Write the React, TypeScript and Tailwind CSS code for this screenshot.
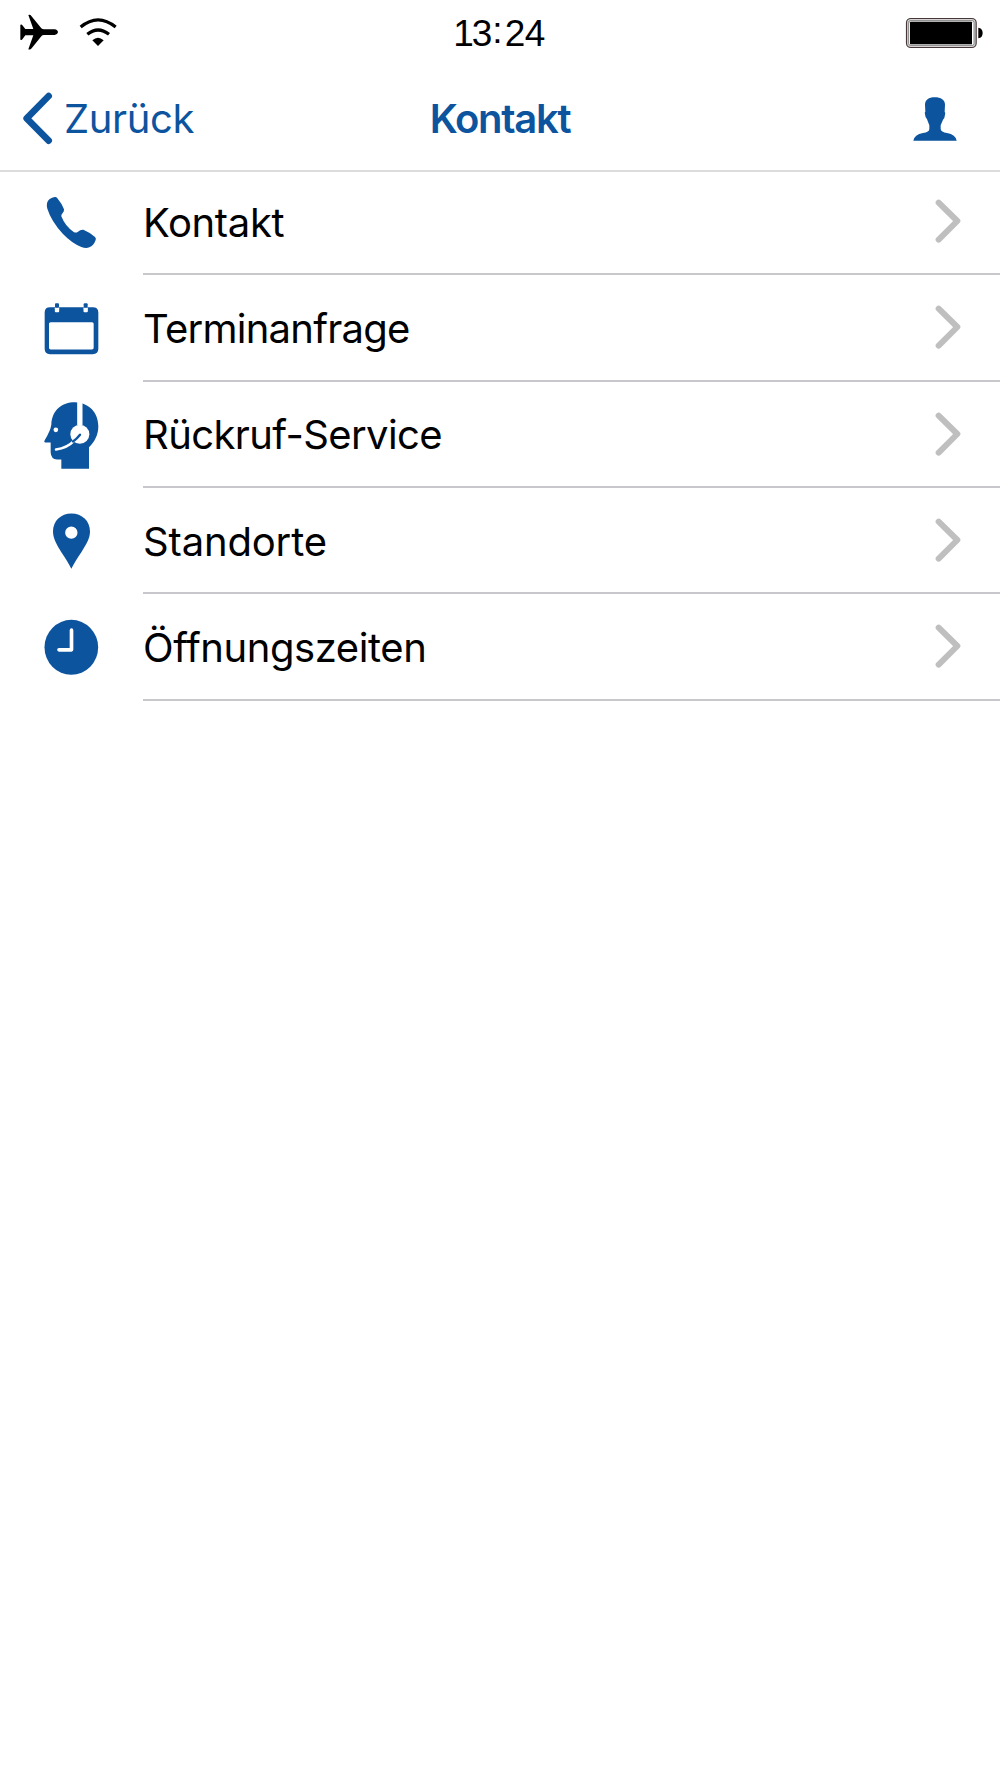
import type { ReactNode } from 'react';

type Entry = {
  label: string;
  icon: ReactNode;
  spacing: string;
};

const entries: Entry[] = [
  { label: 'Kontakt', icon: <PhoneIcon />, spacing: 'tracking-[-0.35px]' },
  { label: 'Terminanfrage', icon: <CalendarIcon />, spacing: 'tracking-[-0.75px]' },
  { label: 'Rückruf-Service', icon: <HeadsetIcon />, spacing: 'tracking-[-0.6px]' },
  { label: 'Standorte', icon: <PinIcon />, spacing: 'tracking-[-0.15px]' },
  { label: 'Öffnungszeiten', icon: <ClockIcon />, spacing: 'tracking-[-0.43px]' },
];

function PhoneIcon() {
  return (
    <svg width="64" height="72" viewBox="60 15 192 216" fill="#0d549f">
      <path d="M104 51 Q108 50 111 53 Q126 71 132 88 Q133 94 128 99 Q123 104 124 109 Q135 138 161 156 Q168 160 174 155 Q181 148 190 149 Q208 156 225 171 Q229 175 227 180 Q221 197 208 202 Q198 206 184 201 Q156 190 129 162 Q94 124 82 86 Q77 66 89 57 Q96 52 104 51 Z" />
    </svg>
  );
}

function CalendarIcon() {
  return (
    <svg width="64" height="72" viewBox="60 332.5 192 216" fill="#0d549f">
      <path
        fillRule="evenodd"
        d="M90 381 H218 Q235 381 235 397 V506 Q235 522 218 522 H90 Q74 522 74 506 V397 Q74 381 90 381 Z M92 426 Q87 426 87 431 V503 Q87 508 92 508 H216 Q221 508 221 503 V431 Q221 426 216 426 Z"
      />
      <rect x="104.500" y="381" width="13" height="15" rx="3" fill="white" />
      <rect x="190.500" y="381" width="13" height="15" rx="3" fill="white" />
      <rect x="105" y="369" width="12" height="14" rx="3" />
      <rect x="191" y="369" width="12" height="14" rx="3" />
    </svg>
  );
}

function HeadsetIcon() {
  return (
    <svg width="64" height="72" viewBox="60 53.6 192 216" fill="#0d549f">
      <path d="M124 266 V238 H111 Q93 237 92 217 V187 H75 Q71 185 74 180 Q92 151 94 133 C96 90 125 66 165 66 C209 68 235 99 235 138 C235 164 223 186 207 201 V266 Z" />
      <path d="M171.500 60 H187.500 V135 H171.500 Z" fill="white" />
      <circle cx="179.500" cy="162.500" r="28.500" fill="white" />
      <circle cx="107.500" cy="149" r="7" fill="white" />
      <path d="M108 208 Q142 203 162 182" fill="none" stroke="white" strokeWidth="7.500" strokeLinecap="round" />
      <path d="M159 184 Q171 176 180 164" fill="none" stroke="#0d549f" strokeWidth="7" strokeLinecap="round" />
    </svg>
  );
}

function PinIcon() {
  return (
    <svg width="64" height="72" viewBox="60 42.6 192 216" fill="#0d549f">
      <path
        fillRule="evenodd"
        d="M154 237 Q144 216 124 187 C110 164 99 146 99 125 C99 93 123 71 154 71 C186 71 210 93 210 125 C210 146 198 165 184 187 Q164 216 154 237 Z M154 110 A18.500 18.500 0 1 0 154 147 A18.500 18.500 0 1 0 154 110 Z"
      />
    </svg>
  );
}

function ClockIcon() {
  return (
    <svg width="64" height="72" viewBox="60 360.5 192 216">
      <ellipse cx="154" cy="472.500" rx="80.500" ry="82.500" fill="#0d549f" />
      <path d="M154.500 421 V480 H117" fill="none" stroke="white" strokeWidth="11" strokeLinecap="round" strokeLinejoin="round" />
    </svg>
  );
}

function StatusBar() {
  return (
    <div className="grid h-[66px] grid-cols-[1fr_auto_1fr] items-center pr-[16px] pl-[19px] text-black">
      <div className="flex items-center gap-5 pb-[2px]">
        <svg width="40" height="36" viewBox="57 40 120 108">
          <path d="M85 43 Q91 41 94 46 L124 83 Q127 86 132 86 H164 Q173 87 174 95 Q173 102 164 103 H132 Q127 103 124 107 L95 143 Q91 148 85 146 L100 104 H76 L66 117 Q61 120 61 116 V74 Q61 70 66 72 L76 85 H100 Z" />
        </svg>
        <svg width="38" height="30" viewBox="236 48 114 90" fill="none" stroke="black">
          <path d="M241 78 Q293 35 346 78" strokeWidth="9.500" />
          <path d="M261 100 Q293 74 326 100" strokeWidth="9.500" />
          <path d="M276 118 Q293 103 310 118 L293 135 Z" fill="black" stroke="none" />
        </svg>
      </div>
      <div className="flex pr-[5px] font-['Liberation_Sans',sans-serif] text-[37px] leading-none">
        <span className="tracking-[-2px]">13</span>
        <span className="px-[2px] pb-[3px] leading-[32px]">:</span>
        <span className="tracking-[-0.5px]">24</span>
      </div>
      <svg className="mb-[1px] justify-self-end" width="79" height="34" viewBox="135 46 237 102">
        <rect x="139.500" y="53.500" width="209" height="87" rx="13" fill="#d6d4d4" stroke="#463838" strokeWidth="3.500" />
        <rect x="146" y="60" width="196" height="74" rx="5" fill="white" stroke="#555" strokeWidth="2" />
        <rect x="150" y="63" width="186" height="68" rx="2" />
        <path d="M355 81 Q368 83 368 97 Q368 111 355 113 Z" />
      </svg>
    </div>
  );
}

function NavBar() {
  return (
    <div className="grid h-[104px] grid-cols-[1fr_auto_1fr] items-center pr-[40px] pl-[20px] text-[#0d549f]">
      <button className="flex items-center gap-[10px]">
        <svg width="34" height="56" viewBox="60 270 102 168" fill="none">
          <path d="M146 288 L80 355 L146 422" stroke="#0d549f" strokeWidth="20" strokeLinecap="round" strokeLinejoin="round" />
        </svg>
        <span className="pt-[2px] text-[40px] leading-none tracking-[-0.35px]">Zurück</span>
      </button>
      <h1 className="pt-[2px] pl-[20px] text-center text-[40px] leading-none font-semibold tracking-[-1.3px]">Kontakt</h1>
      <svg className="mt-[1px] justify-self-end" width="50" height="50" viewBox="149 280 150 150" fill="#0d549f">
        <path d="M159 420 Q162 402 188 397 Q207 394 207 385 V374 L200 356 Q195 352 194 341 Q192 335 195 333 L194 312 C194 298 205 290 223 290 C242 290 254 298 254 312 L253 333 Q256 336 254 342 Q253 353 248 357 L241 374 V385 Q242 394 260 397 Q286 402 289 420 Z" />
      </svg>
    </div>
  );
}

function Row({ label, icon, spacing }: Entry) {
  return (
    <li className="flex h-[106.33px] pl-10">
      <div className="flex w-[103px] items-center pb-[2px]">{icon}</div>
      <div className="flex flex-1 items-center justify-between border-b-2 border-[#c8c7cc] pr-[36px]">
        <span className={`pt-[3px] text-[40px] leading-none ${spacing}`}>{label}</span>
        <svg width="32" height="48" viewBox="96 51 96 144" fill="none">
          <path d="M116 68 L172 123 L116 179" stroke="#bfbfbf" strokeWidth="18" strokeLinecap="round" strokeLinejoin="round" />
        </svg>
      </div>
    </li>
  );
}

export default function App() {
  return (
    <div className="min-h-[1778px] w-[1000px] bg-white font-['Inter',sans-serif] text-black">
      <header className="border-b-2 border-[#dcdcdc]">
        <StatusBar />
        <NavBar />
      </header>
      <ul className="-mt-[3px]">
        {entries.map((entry) => (
          <Row key={entry.label} {...entry} />
        ))}
      </ul>
    </div>
  );
}
